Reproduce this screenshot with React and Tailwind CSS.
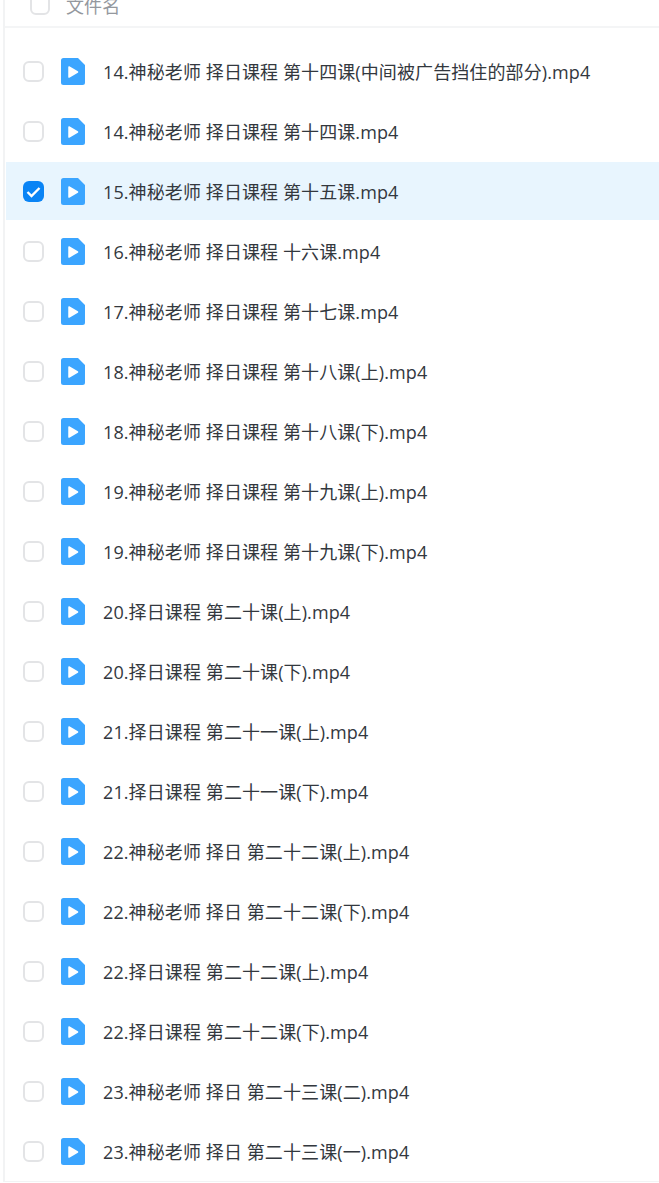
const files = [
  "14.神秘老师 择日课程 第十四课(中间被广告挡住的部分).mp4",
  "14.神秘老师 择日课程 第十四课.mp4",
  "15.神秘老师 择日课程 第十五课.mp4",
  "16.神秘老师 择日课程 十六课.mp4",
  "17.神秘老师 择日课程 第十七课.mp4",
  "18.神秘老师 择日课程 第十八课(上).mp4",
  "18.神秘老师 择日课程 第十八课(下).mp4",
  "19.神秘老师 择日课程 第十九课(上).mp4",
  "19.神秘老师 择日课程 第十九课(下).mp4",
  "20.择日课程 第二十课(上).mp4",
  "20.择日课程 第二十课(下).mp4",
  "21.择日课程 第二十一课(上).mp4",
  "21.择日课程 第二十一课(下).mp4",
  "22.神秘老师 择日 第二十二课(上).mp4",
  "22.神秘老师 择日 第二十二课(下).mp4",
  "22.择日课程 第二十二课(上).mp4",
  "22.择日课程 第二十二课(下).mp4",
  "23.神秘老师 择日 第二十三课(二).mp4",
  "23.神秘老师 择日 第二十三课(一).mp4",
];

function FileIcon() {
  return (
    <svg width="24" height="27" viewBox="0 0 24 27" className="block shrink-0">
      <path d="M2.5 0H17L24 7V24.5A2.5 2.5 0 0 1 21.5 27H2.5A2.5 2.5 0 0 1 0 24.5V2.5A2.5 2.5 0 0 1 2.5 0Z" fill="#3ba5ff" />
      <path d="M8 9L16.5 14L8 19Z" fill="#ffffff" strokeLinejoin="round" stroke="#ffffff" strokeWidth="1.5" />
    </svg>
  );
}

function Check({ checked }) {
  return checked ? (
    <span className="flex h-[21px] w-[21px] shrink-0 items-center justify-center rounded-[6px] bg-[#0a84f5]">
      <svg width="15" height="12" viewBox="0 0 15 12" fill="none">
        <path d="M1.5 6L5.5 10L13.5 2" stroke="#ffffff" strokeWidth="2.4" />
      </svg>
    </span>
  ) : (
    <span className="h-[21px] w-[21px] shrink-0 rounded-[6px] border-2 border-[#e3e4e6] bg-white" />
  );
}

export default function App() {
  return (
    <div className="h-[1183px] w-[659px] overflow-hidden bg-white font-['Microsoft_YaHei','Open_Sans','Noto_Sans_CJK_SC',sans-serif]">
      <div className="ml-[3px] h-[1182px] border-b border-l-2 border-[#f2f3f4]">
        <div className="flex h-[28px] items-end overflow-hidden border-b-2 border-[#f4f5f6] pl-[25px]">
          <div className="mb-[11px] flex h-[14px] items-end gap-[16px]">
            <span className="h-[21px] w-[20px] shrink-0 rounded-[6px] border-2 border-[#e3e4e6]" />
            <span className="mb-[-3px] text-[18px] leading-[24px] tracking-[0.1px] text-[#94989e]">文件名</span>
          </div>
        </div>
        <div className="pt-[14px]">
          {files.map((name, i) => (
            <div key={i} className={`mb-[2px] ml-[1px] flex h-[58px] items-center pl-[17px] pt-[1px] ${i === 2 ? "bg-[#e8f5fe]" : ""}`}>
              <Check checked={i === 2} />
              <span className="ml-[17px]"><FileIcon /></span>
              <span className="ml-[18px] whitespace-nowrap text-[18px] leading-[24px] tracking-[0.1px] text-[#33383e]">{name}</span>
            </div>
          ))}
        </div>
      </div>
    </div>
  );
}
